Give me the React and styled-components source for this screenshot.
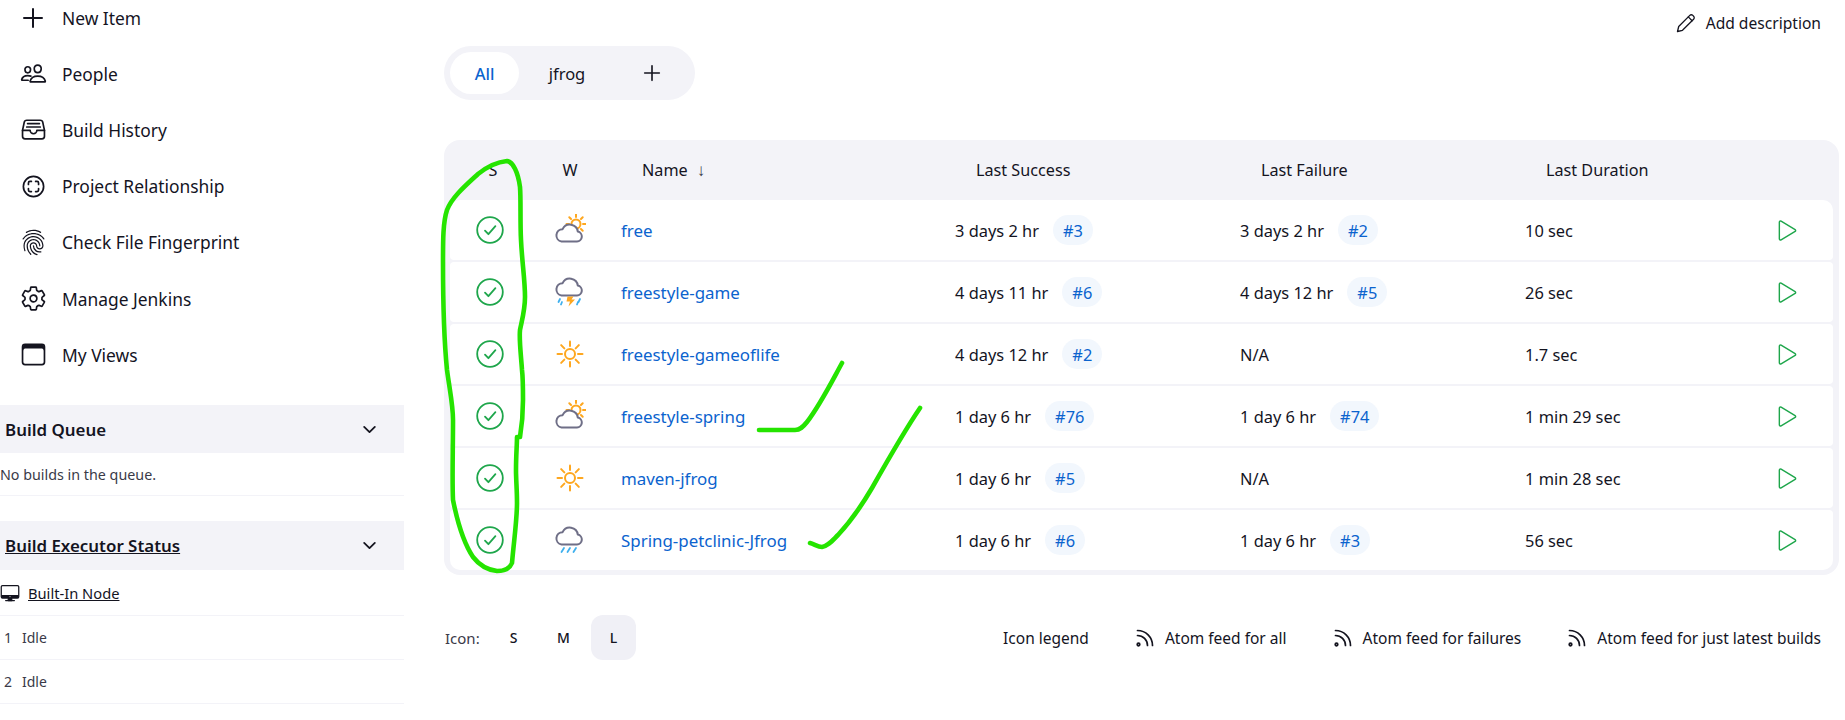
import styled, { createGlobalStyle } from "styled-components";
import {
  IoAddOutline,
  IoPeopleOutline,
  IoFileTrayFullOutline,
  IoScanCircleOutline,
  IoFingerPrintOutline,
  IoSettingsOutline,
  IoBrowsersOutline,
  IoChevronDownOutline,
  IoDesktopOutline,
  IoPlayOutline,
} from "react-icons/io5";

const GlobalStyle = createGlobalStyle`
  html, body {
    margin: 0;
    padding: 0;
    background: #fff;
    color: #14141f;
    font-family: "Noto Sans", "Open Sans", sans-serif;
  }
`;

const navItems = [
  { label: "New Item", Icon: IoAddOutline, size: 32 },
  { label: "People", Icon: IoPeopleOutline },
  { label: "Build History", Icon: IoFileTrayFullOutline },
  { label: "Project Relationship", Icon: IoScanCircleOutline },
  { label: "Check File Fingerprint", Icon: IoFingerPrintOutline },
  { label: "Manage Jenkins", Icon: IoSettingsOutline },
  { label: "My Views", Icon: IoBrowsersOutline },
];

const jobs = [
  { name: "free", weather: "cloudy", success: "3 days 2 hr", successBuild: "#3", failure: "3 days 2 hr", failureBuild: "#2", duration: "10 sec" },
  { name: "freestyle-game", weather: "storm", success: "4 days 11 hr", successBuild: "#6", failure: "4 days 12 hr", failureBuild: "#5", duration: "26 sec" },
  { name: "freestyle-gameoflife", weather: "sunny", success: "4 days 12 hr", successBuild: "#2", failure: "N/A", duration: "1.7 sec" },
  { name: "freestyle-spring", weather: "cloudy", success: "1 day 6 hr", successBuild: "#76", failure: "1 day 6 hr", failureBuild: "#74", duration: "1 min 29 sec" },
  { name: "maven-jfrog", weather: "sunny", success: "1 day 6 hr", successBuild: "#5", failure: "N/A", duration: "1 min 28 sec" },
  { name: "Spring-petclinic-Jfrog", weather: "rain", success: "1 day 6 hr", successBuild: "#6", failure: "1 day 6 hr", failureBuild: "#3", duration: "56 sec" },
];

const feeds = ["Atom feed for all", "Atom feed for failures", "Atom feed for just latest builds"];

const StatusIcon = () => (
  <svg width="28" height="28" viewBox="0 0 28 28" fill="none" stroke="#1ea64b" strokeWidth="1.8" strokeLinecap="round" strokeLinejoin="round">
    <circle cx="14" cy="14" r="12.8" />
    <path d="M9 14.600l3.400 3.600 7-8" />
  </svg>
);

const PencilIcon = () => (
  <svg width="20" height="20" viewBox="0 0 20 20" fill="none" stroke="#14141f" strokeWidth="1.300" strokeLinejoin="round" strokeLinecap="round">
    <path d="M1.500 18.500l1.200-5L13.800 2.400a2.100 2.100 0 0 1 3 0l.8.800a2.100 2.100 0 0 1 0 3L6.500 17.300z" />
    <path d="M12.300 3.900l3.800 3.800" />
  </svg>
);

const Sun = ({ cx, cy, r = 5, inner = 8, outer = 12.5 }) => {
  const rays = [0, 45, 90, 135, 180, 225, 270, 315];
  return (
    <g stroke="#fea71f" strokeWidth="2" strokeLinecap="round" fill="none">
      <circle cx={cx} cy={cy} r={r} />
      {rays.map((a) => {
        const c = Math.cos((a * Math.PI) / 180);
        const s = Math.sin((a * Math.PI) / 180);
        return <line key={a} x1={cx + c * inner} y1={cy + s * inner} x2={cx + c * outer} y2={cy + s * outer} />;
      })}
    </g>
  );
};

const Cloud = ({ dy = 0 }) => (
  <path
    transform={`translate(0 ${dy})`}
    d="M7.500 27.500H23a5 5 0 0 0 .8-9.900 8 8 0 0 0-15.200-2.400A6.200 6.200 0 0 0 7.500 27.500z"
    fill="#fff"
    stroke="#6f6f87"
    strokeWidth="2"
    strokeLinejoin="round"
  />
);

const WeatherIcon = ({ type }) => (
  <svg width="32" height="32" viewBox="0 0 32 32">
    {type === "sunny" && <Sun cx={16} cy={16} />}
    {type === "cloudy" && (
      <>
        <Sun cx={22} cy={10} r={4.5} inner={7} outer={9.5} />
        <Cloud />
      </>
    )}
    {type === "storm" && (
      <>
        <Cloud dy={-8} />
        <g stroke="#3fb0ee" strokeWidth="1.800" strokeLinecap="round">
          <path d="M6 23l-1.500 3M8 26l-1 2.500M26 23l-1.500 3M24 26l-1 2.500" />
        </g>
        <path d="M13.500 20.500h6l-2 3h3.500l-6.500 7 1.500-5h-3.500z" fill="#fea71f" />
      </>
    )}
    {type === "rain" && (
      <>
        <Cloud dy={-7} />
        <g stroke="#3fb0ee" strokeWidth="1.800" strokeLinecap="round">
          <path d="M10 24l-2.500 4M16 24l-2.500 4M22 24l-2.500 4" />
        </g>
      </>
    )}
  </svg>
);

const FeedIcon = () => (
  <svg width="20" height="20" viewBox="0 0 20 20" fill="none" stroke="#14141f" strokeWidth="1.700" strokeLinecap="round">
    <path d="M2.500 7.500a10 10 0 0 1 10 10" />
    <path d="M2.500 2.500a15 15 0 0 1 15 15" />
    <circle cx="3.500" cy="16.500" r="1.300" />
  </svg>
);

const Annotations = () => (
  <Scribble viewBox="0 0 1845 720" fill="none" stroke="#25e400" strokeWidth="4.600" strokeLinecap="round" strokeLinejoin="round">
    <path d="M507 161C497 162 488 166 478 174C466 185 452 197 447 210C443 222 443 240 443 262C443 290 443 330 447 370C450 392 453 405 453 420C453 450 452 480 453 500C458 525 465 545 473 557C480 566 488 570 497 571C505 571 510 568 512 563C514 540 517 520 517 503C517 490 516 480 516 470C516 455 517 445 517 437L520 437C522 425 523 412 523 400C523 385 523 378 522 370C521 355 519 340 520 330C522 320 525 310 525 297C525 280 522 262 521 240C520 220 521 200 520 187C518 172 513 162 507 161Z" />
    <path d="M759 430C772 430 785 430 795 430C800 430 803 427 807 422C820 405 830 385 842 363" />
    <path d="M810 543C814 544 818 547 822 547C828 546 832 541 838 535C852 520 862 505 872 488C885 465 905 430 920 408" />
  </Scribble>
);

const App = () => (
  <Page>
    <GlobalStyle />
    <Sidebar>
      <NavList>
        {navItems.map(({ label, Icon, size }) => (
          <NavItem key={label}>
            <NavIcon>
              <Icon size={size || 27} />
            </NavIcon>
            {label}
          </NavItem>
        ))}
      </NavList>
      <PaneHeader>
        <PaneTitle>Build Queue</PaneTitle>
        <IoChevronDownOutline size={19} />
      </PaneHeader>
      <QueueEmpty>No builds in the queue.</QueueEmpty>
      <PaneHeader $spaced>
        <PaneTitle $link>Build Executor Status</PaneTitle>
        <IoChevronDownOutline size={19} />
      </PaneHeader>
      <NodeRow>
        <IoDesktopOutline size={20} />
        <NodeLink>Built-In Node</NodeLink>
      </NodeRow>
      <ExecutorRow>
        <ExecutorNumber>1</ExecutorNumber>Idle
      </ExecutorRow>
      <ExecutorRow>
        <ExecutorNumber>2</ExecutorNumber>Idle
      </ExecutorRow>
      <NextNode>
        <IoDesktopOutline size={20} />
      </NextNode>
    </Sidebar>

    <Main>
      <TopBar>
        <AddDescription>
          <PencilIcon />
          Add description
        </AddDescription>
      </TopBar>
      <Tabs>
        <Tab $active $width={69}>All</Tab>
        <Tab $width={96}>jfrog</Tab>
        <Tab $width={74}>
          <IoAddOutline size={26} />
        </Tab>
      </Tabs>
      <Table>
        <HeaderRow>
          <HeaderCell $center>S</HeaderCell>
          <HeaderCell $center>W</HeaderCell>
          <HeaderCell>
            Name<SortArrow>↓</SortArrow>
          </HeaderCell>
          <HeaderCell>Last Success</HeaderCell>
          <HeaderCell>Last Failure</HeaderCell>
          <HeaderCell>Last Duration</HeaderCell>
        </HeaderRow>
        {jobs.map((job) => (
          <JobRow key={job.name}>
            <IconCell>
              <StatusIcon />
            </IconCell>
            <IconCell>
              <WeatherIcon type={job.weather} />
            </IconCell>
            <JobName>{job.name}</JobName>
            <TimeCell>
              {job.success}
              <BuildBadge>{job.successBuild}</BuildBadge>
            </TimeCell>
            <TimeCell>
              {job.failure}
              {job.failureBuild && <BuildBadge>{job.failureBuild}</BuildBadge>}
            </TimeCell>
            <TimeCell>{job.duration}</TimeCell>
            <PlayCell>
              <IoPlayOutline size={29} />
            </PlayCell>
          </JobRow>
        ))}
      </Table>
      <Footer>
        <SizePicker>
          <SizeLabel>Icon:</SizeLabel>
          <SizeButton>S</SizeButton>
          <SizeButton>M</SizeButton>
          <SizeButton $active>L</SizeButton>
        </SizePicker>
        <FeedLinks>
          <FeedLink>Icon legend</FeedLink>
          {feeds.map((feed) => (
            <FeedLink key={feed}>
              <FeedIcon />
              {feed}
            </FeedLink>
          ))}
        </FeedLinks>
      </Footer>
    </Main>
    <Annotations />
  </Page>
);

const Page = styled.div`
  position: relative;
  display: flex;
  width: 1845px;
  height: 720px;
  overflow: hidden;
`;

const Sidebar = styled.aside`
  flex: 0 0 404px;
  margin-top: -10.5px;
`;

const NavList = styled.nav`
  display: flex;
  flex-direction: column;
  margin-bottom: 22.3px;
`;

const NavItem = styled.a`
  display: flex;
  align-items: center;
  height: 56.2px;
  font-size: 17.4px;
`;

const NavIcon = styled.span`
  display: flex;
  justify-content: center;
  width: 32px;
  margin: 0 13px 0 17px;
`;

const PaneHeader = styled.div`
  display: flex;
  align-items: center;
  justify-content: space-between;
  height: ${(p) => (p.$spaced ? "49px" : "48px")};
  margin-top: ${(p) => (p.$spaced ? "25px" : "0")};
  padding: 0 25px 0 5px;
  background: #f3f3f8;
`;

const PaneTitle = styled.span`
  font-size: 16.9px;
  font-weight: 600;
  text-decoration: ${(p) => (p.$link ? "underline" : "none")};
`;

const QueueEmpty = styled.div`
  display: flex;
  align-items: center;
  height: 43px;
  padding-top: 1px;
  box-sizing: border-box;
  font-size: 14.3px;
  color: #3a3a48;
  border-bottom: 1px solid #f3f3f8;
`;

const NodeRow = styled.div`
  display: flex;
  align-items: center;
  gap: 8px;
  height: 45px;
  font-size: 14.7px;
  border-bottom: 1px solid #f3f3f8;
`;

const NodeLink = styled.span`
  text-decoration: underline;
`;

const ExecutorRow = styled.div`
  display: flex;
  align-items: center;
  height: 43px;
  font-size: 14px;
  color: #3a3a48;
  border-bottom: 1px solid #f3f3f8;
`;

const ExecutorNumber = styled.span`
  width: 22px;
  padding-left: 4px;
  box-sizing: border-box;
`;

const NextNode = styled.div`
  padding-top: 14px;
`;

const Main = styled.main`
  flex: 1;
  min-width: 0;
  padding: 0 6px 0 40px;
`;

const TopBar = styled.div`
  display: flex;
  justify-content: flex-end;
  align-items: center;
  height: 46px;
  padding-right: 18px;
`;

const AddDescription = styled.a`
  display: flex;
  align-items: center;
  gap: 10px;
  font-size: 15.6px;
`;

const Tabs = styled.div`
  display: inline-flex;
  height: 54px;
  padding: 6px;
  box-sizing: border-box;
  margin-bottom: 40px;
  border-radius: 27px;
  background: #f3f3f8;
  vertical-align: top;
`;

const Tab = styled.a`
  display: flex;
  align-items: center;
  justify-content: center;
  width: ${(p) => p.$width}px;
  border-radius: 21px;
  font-size: 16.5px;
  font-weight: ${(p) => (p.$active ? 500 : 400)};
  color: ${(p) => (p.$active ? "#0b63ce" : "#14141f")};
  background: ${(p) => (p.$active ? "#fff" : "transparent")};
`;

const tableColumns = "80px 80px 334px 285px 285px 250px 1fr";

const Table = styled.div`
  display: flex;
  flex-direction: column;
  gap: 2px;
  padding: 0 6px 5px;
  border-radius: 16px;
  background: #f3f3f8;
`;

const HeaderRow = styled.div`
  display: grid;
  grid-template-columns: ${tableColumns};
  align-items: center;
  height: 58px;
  padding-top: 1px;
  box-sizing: border-box;
  font-size: 16.2px;
`;

const HeaderCell = styled.div`
  text-align: ${(p) => (p.$center ? "center" : "left")};
  padding-left: ${(p) => (p.$center ? "0" : "32px")};
  &:first-child {
    padding-left: 6px;
  }
`;

const SortArrow = styled.span`
  margin-left: 9px;
  font-size: 17px;
  color: #3a3a48;
`;

const JobRow = styled.div`
  display: grid;
  grid-template-columns: ${tableColumns};
  align-items: center;
  height: 60px;
  background: #fff;
  border-radius: 4px;
  &:nth-child(2) {
    border-radius: 10px 10px 4px 4px;
  }
  &:last-child {
    border-radius: 4px 4px 10px 10px;
  }
`;

const IconCell = styled.div`
  display: flex;
  justify-content: center;
`;

const JobName = styled.a`
  padding-left: 11px;
  font-size: 16.9px;
  font-weight: 450;
  color: #0b63ce;
`;

const TimeCell = styled.div`
  display: flex;
  align-items: center;
  gap: 14px;
  padding-left: 11px;
  font-size: 16.4px;
`;

const BuildBadge = styled.span`
  display: flex;
  align-items: center;
  height: 30px;
  padding: 0 10px;
  border-radius: 15px;
  background: #f2f7fd;
  color: #0b63ce;
  font-weight: 450;
`;

const PlayCell = styled.div`
  display: flex;
  justify-content: flex-end;
  color: #1ea64b;
  padding-right: 31px;
  svg path {
    stroke-width: 25;
  }
`;

const Footer = styled.div`
  display: flex;
  justify-content: space-between;
  align-items: center;
  margin-top: 40px;
  padding-right: 18px;
`;

const SizePicker = styled.div`
  display: flex;
  align-items: center;
  font-size: 15px;
`;

const SizeLabel = styled.span`
  color: #3a3a48;
  margin: 0 8px 0 1px;
  width: 38px;
`;

const SizeButton = styled.a`
  display: flex;
  align-items: center;
  justify-content: center;
  width: 45px;
  height: 45px;
  margin-right: 5px;
  border-radius: 12px;
  font-size: 14px;
  font-weight: 500;
  background: ${(p) => (p.$active ? "#f0f0f6" : "transparent")};
`;

const FeedLinks = styled.div`
  display: flex;
  align-items: center;
  gap: 46px;
`;

const FeedLink = styled.a`
  display: flex;
  align-items: center;
  gap: 10px;
  font-size: 15.5px;
`;

const Scribble = styled.svg`
  position: absolute;
  inset: 0;
  width: 1845px;
  height: 720px;
  pointer-events: none;
`;

export default App;
